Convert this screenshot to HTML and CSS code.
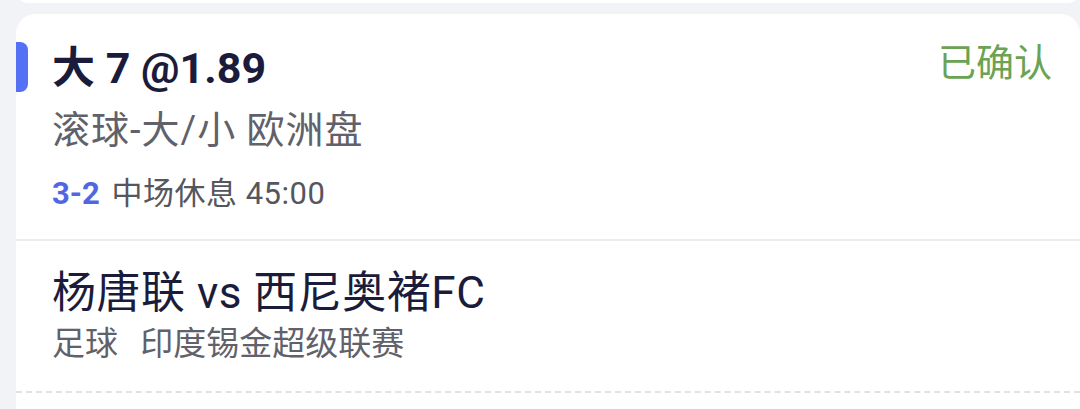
FILE: index.html
```html
<!DOCTYPE html>
<html lang="zh-CN">
<head>
    <meta charset="UTF-8">
    <meta name="viewport" content="width=device-width, initial-scale=1.0">
    <title>注单详情</title>
    <link rel="stylesheet" href="styles.css">
</head>
<body>
    <div class="list">
        <div class="card prev-card"></div>

        <div class="card">
            <div class="bet-info">
                <div class="bet-head">
                    <div class="bet-title">大 7 @1.89</div>
                    <div class="bet-status">已确认</div>
                </div>
                <div class="bet-market">滚球-大/小 欧洲盘</div>
                <div class="bet-live">
                    <span class="score">3-2</span>
                    <span class="period">中场休息 45:00</span>
                </div>
            </div>
            <div class="match-info">
                <div class="match-name">杨唐联 vs 西尼奥褚FC</div>
                <div class="match-league">
                    <span class="sport">足球</span>
                    <span>印度锡金超级联赛</span>
                </div>
            </div>
            <div class="bet-detail"></div>
        </div>
    </div>
</body>
</html>
```

FILE: styles.css
```css
body {
    margin: 0;
    background-color: #f2f3f6;
    font-family: Roboto, "Noto Sans CJK SC", sans-serif;
    color: #1b1c3b;
}
.list {
    padding-left: 16px;
}
.card {
    background: white;
    border-radius: 20px;
    margin-bottom: 11px;
}
.prev-card {
    height: 23px;
    margin-top: -20px;
}
.bet-info {
    padding: 27px 28px 23px 36px;
    border-bottom: 2px solid #ebecf0;
}
.bet-head {
    display: flex;
    justify-content: space-between;
    align-items: flex-start;
}
.bet-title {
    position: relative;
    font-size: 43px;
    font-weight: bold;
    line-height: 54px;
}
.bet-title::before {
    content: "";
    position: absolute;
    left: -36px;
    top: 1px;
    width: 12px;
    height: 50px;
    background: #5470f5;
    border-radius: 0 8px 8px 0;
}
.bet-status {
    font-size: 38px;
    line-height: 44px;
    color: #6aa354;
}
.bet-market {
    margin-top: 9px;
    font-size: 38px;
    letter-spacing: 1px;
    line-height: 52px;
    color: #60616a;
}
.bet-live {
    margin-top: 16px;
    font-size: 31px;
    line-height: 44px;
    color: #55565e;
}
.score {
    font-weight: bold;
    color: #4f67e0;
    margin-right: 4px;
}
.period {
    letter-spacing: 0.5px;
}
.match-info {
    padding: 25px 28px 25px 36px;
    border-bottom: 2px dashed #e2e2e6;
}
.match-name {
    font-size: 44px;
    letter-spacing: 0.5px;
    line-height: 54px;
}
.match-league {
    margin-top: 2px;
    font-size: 33px;
    line-height: 44px;
    color: #60616a;
}
.sport {
    margin-right: 14px;
}
.bet-detail {
    height: 80px;
}
```
